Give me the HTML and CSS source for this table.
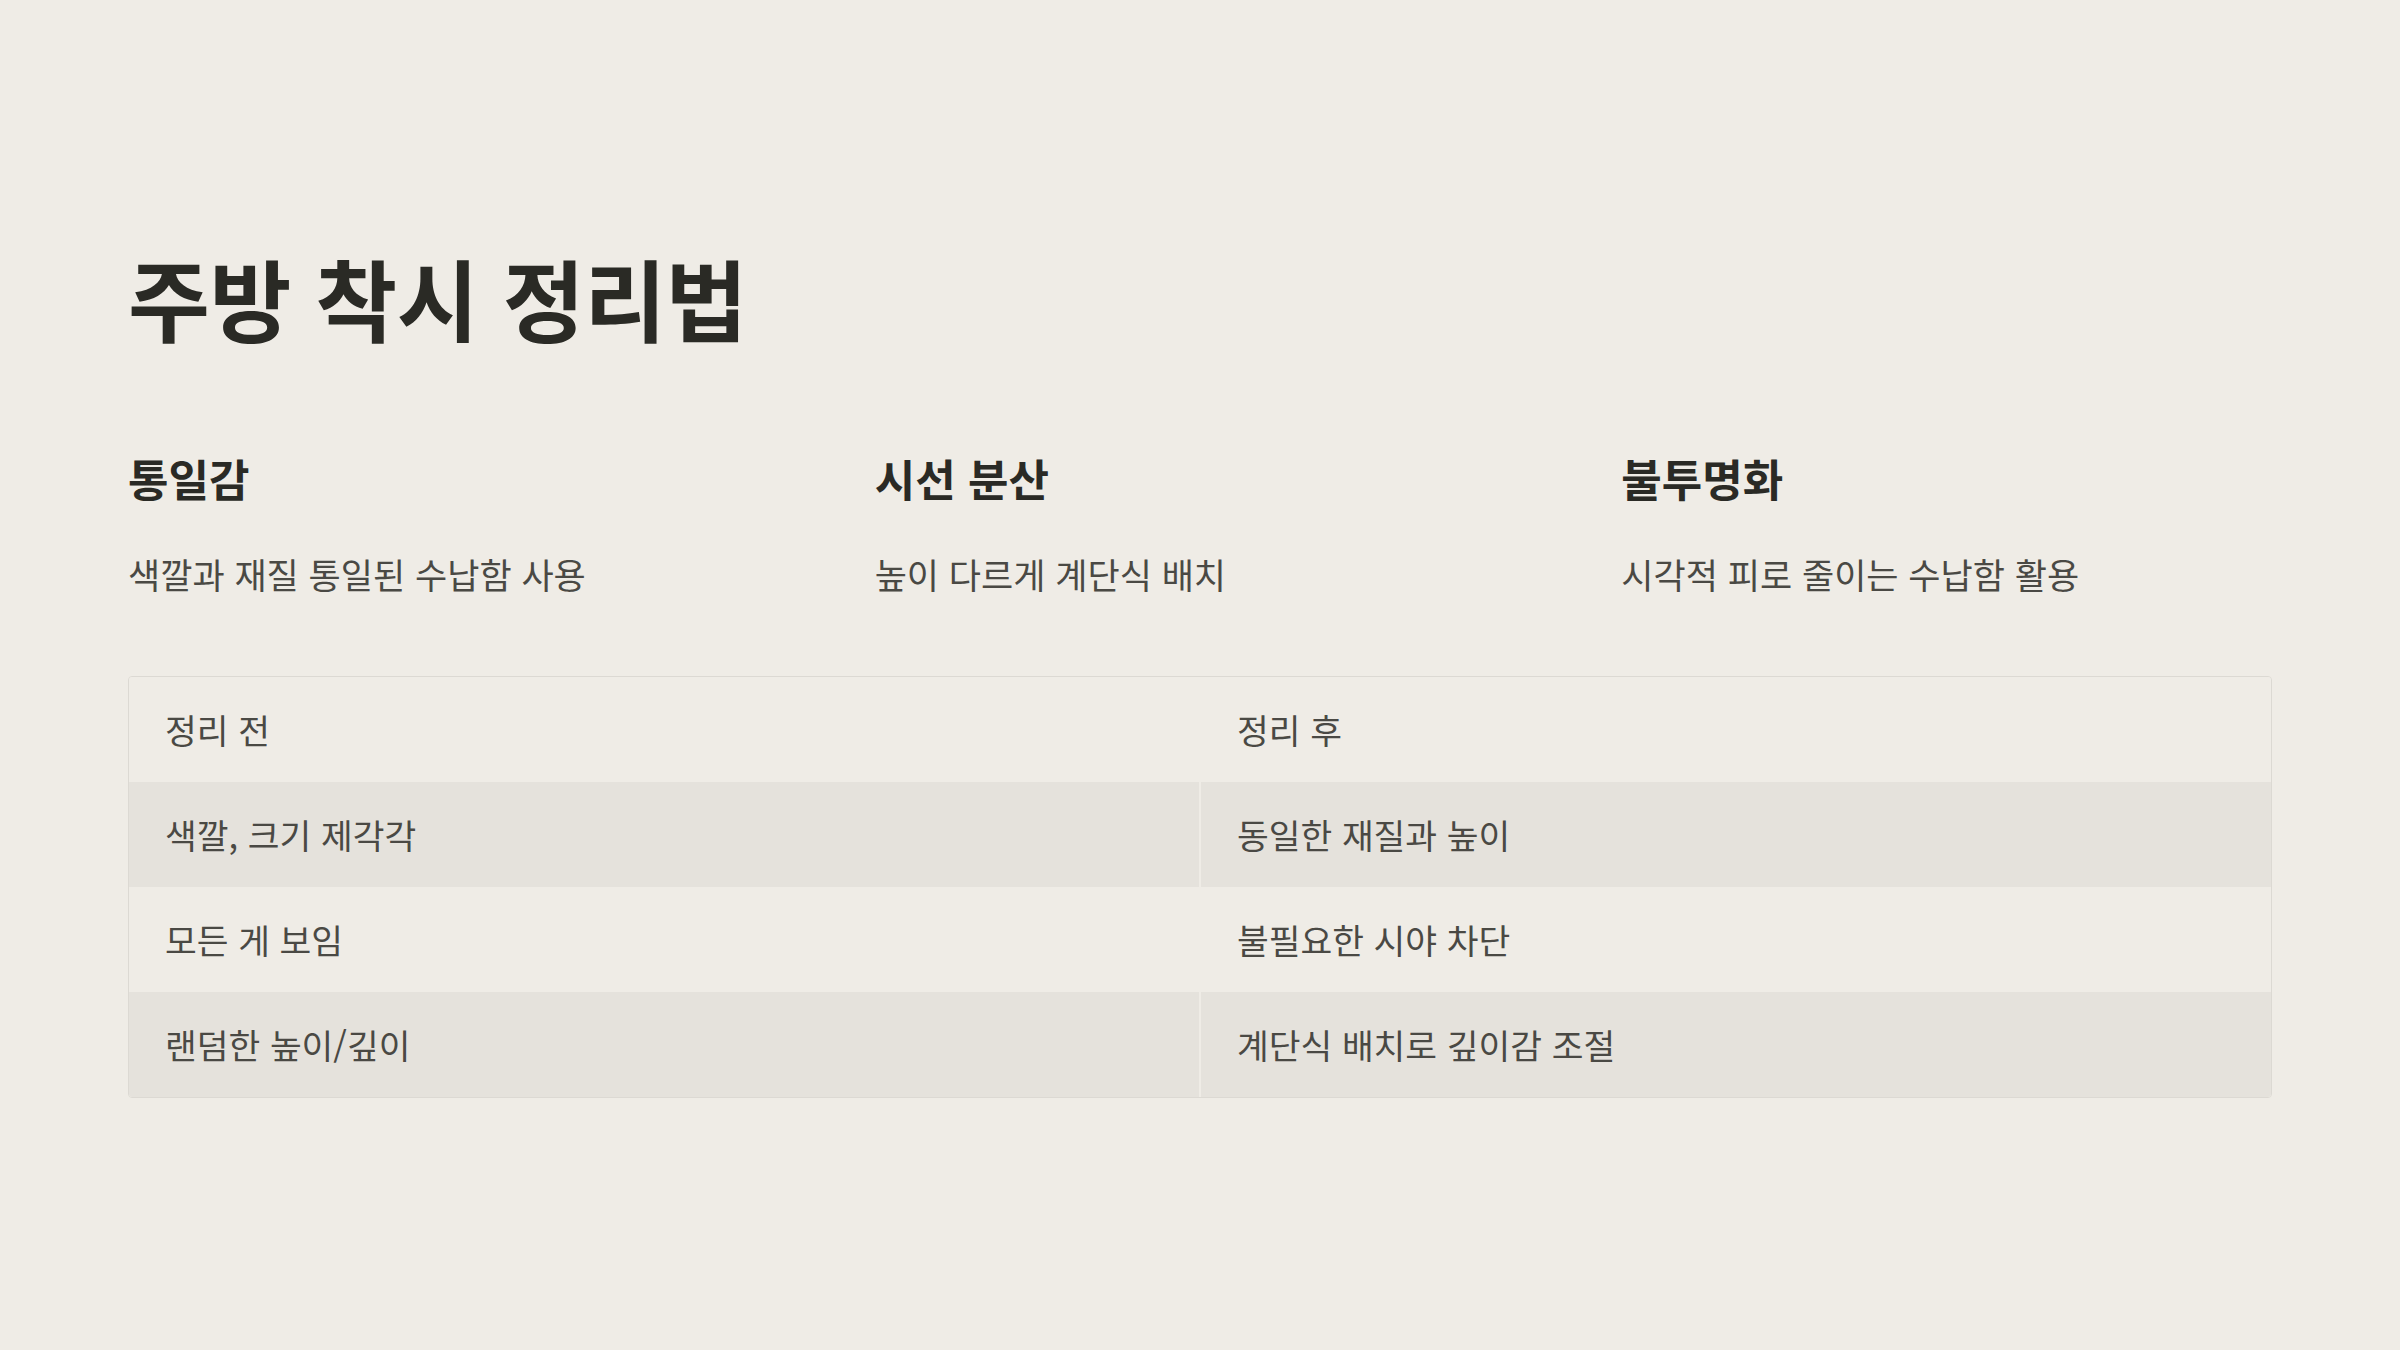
FILE: index.html
```html
<!DOCTYPE html>
<html lang="ko">
<head>
<meta charset="utf-8">
<title>주방 착시 정리법</title>
<link rel="stylesheet" href="styles.css">
</head>
<body>
<main class="page">
  <h1 class="title">주방 착시 정리법</h1>
  <section class="points">
    <div class="point">
      <h2 class="point-title">통일감</h2>
      <p class="point-desc">색깔과 재질 통일된 수납함 사용</p>
    </div>
    <div class="point">
      <h2 class="point-title">시선 분산</h2>
      <p class="point-desc">높이 다르게 계단식 배치</p>
    </div>
    <div class="point">
      <h2 class="point-title">불투명화</h2>
      <p class="point-desc">시각적 피로 줄이는 수납함 활용</p>
    </div>
  </section>
  <div class="table">
    <div class="row head">
      <div class="cell">정리 전</div>
      <div class="cell">정리 후</div>
    </div>
    <div class="row alt">
      <div class="cell">색깔, 크기 제각각</div>
      <div class="cell">동일한 재질과 높이</div>
    </div>
    <div class="row">
      <div class="cell">모든 게 보임</div>
      <div class="cell">불필요한 시야 차단</div>
    </div>
    <div class="row alt">
      <div class="cell">랜덤한 높이/깊이</div>
      <div class="cell">계단식 배치로 깊이감 조절</div>
    </div>
  </div>
</main>
</body>
</html>
```

FILE: styles.css
```css
* { box-sizing: border-box; }
html, body {
  margin: 0;
  padding: 0;
  background: #efece6;
}
body {
  font-family: "Noto Sans CJK KR", "Noto Sans", sans-serif;
  color: #2a2a25;
}
.page {
  height: 100vh;
  padding: 244px 128px 0;
  display: flex;
  flex-direction: column;
}
.title {
  margin: 0;
  font-size: 89px;
  font-weight: 700;
  line-height: 1.2;
  letter-spacing: -0.005em;
  color: #2a2a25;
}
.points {
  display: grid;
  grid-template-columns: repeat(3, 1fr);
  column-gap: 96px;
  margin-top: 101px;
}
.point-title {
  margin: 0;
  font-size: 44px;
  font-weight: 700;
  line-height: 1.2;
  color: #2a2a25;
}
.point-desc {
  margin: 48px 0 0;
  font-size: 35px;
  font-weight: 400;
  line-height: 1.2;
  color: #4a4944;
}
.table {
  margin-top: 81px;
  border: 1px solid #dcd9d3;
  border-radius: 4px;
  overflow: hidden;
}
.row {
  display: grid;
  grid-template-columns: 1fr 1fr;
  column-gap: 2px;
  height: 105px;
  background: #efece6;
}
.cell {
  display: flex;
  align-items: center;
  padding: 0 36px;
  font-size: 34.5px;
  color: #4a4944;
}
.row.alt .cell {
  background: #e5e2dc;
}
```
